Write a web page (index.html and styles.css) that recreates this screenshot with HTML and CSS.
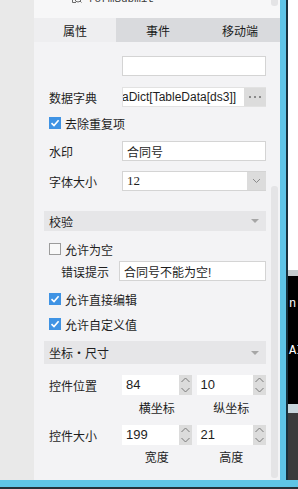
FILE: index.html
```html
<!DOCTYPE html>
<html>
<head>
    <title>控件属性</title>
    <meta charset="utf-8">
    <link rel="stylesheet" href="styles.css">
</head>
<body>
    <div class="main">
        <!-- Left gutter -->
        <div class="side"></div>

        <!-- Property panel -->
        <div class="panel">
            <div class="tree">
                <div class="node">
                    <svg class="node-icon" width="11" height="14" viewBox="0 0 11 14">
                        <path d="M1.5 1 V12.5 H5" fill="none" stroke="#6b6b6b"/>
                        <circle cx="7" cy="9" r="3" fill="none" stroke="#6b6b6b"/>
                        <path d="M9 11 L10.5 12.5" stroke="#6b6b6b"/>
                    </svg>
                    <span>formSubmit</span>
                </div>
                <div class="tree-bar"><div class="tree-thumb"></div></div>
            </div>

            <div class="tabs">
                <div class="tab active">属性</div>
                <div class="tab">事件</div>
                <div class="tab last">移动端</div>
            </div>

            <div class="scroller">
                <div class="form">
                    <div class="row r1">
                        <div class="label"></div>
                        <div class="field"></div>
                    </div>
                    <div class="row r2">
                        <div class="label">数据字典</div>
                        <div class="field dict">
                            <span class="dict-text">aDict[TableData[ds3]]</span>
                            <span class="dots"><i></i><i></i><i></i></span>
                        </div>
                    </div>
                    <div class="row check-row r3">
                        <span class="check on"><svg width="12" height="12" viewBox="0 0 12 12"><path d="M2.5 6.2 L5 8.6 L9.6 3.2" fill="none" stroke="#fff" stroke-width="1.6"/></svg></span>
                        <span>去除重复项</span>
                    </div>
                    <div class="row r4">
                        <div class="label">水印</div>
                        <div class="field">合同号</div>
                    </div>
                    <div class="row r5">
                        <div class="label">字体大小</div>
                        <div class="field select">
                            <span class="select-text">12</span>
                            <span class="drop"><svg width="9" height="6" viewBox="0 0 9 6"><path d="M1 1 L4.5 4.5 L8 1" fill="none" stroke="#8a8a8a"/></svg></span>
                        </div>
                    </div>

                    <div class="section s1">
                        <span>校验</span>
                        <span class="tri"></span>
                    </div>
                    <div class="row check-row r6">
                        <span class="check"></span>
                        <span>允许为空</span>
                    </div>
                    <div class="row r7">
                        <div class="label sub">错误提示</div>
                        <div class="field">合同号不能为空!</div>
                    </div>
                    <div class="row check-row r8">
                        <span class="check on"><svg width="12" height="12" viewBox="0 0 12 12"><path d="M2.5 6.2 L5 8.6 L9.6 3.2" fill="none" stroke="#fff" stroke-width="1.6"/></svg></span>
                        <span>允许直接编辑</span>
                    </div>
                    <div class="row check-row r9">
                        <span class="check on"><svg width="12" height="12" viewBox="0 0 12 12"><path d="M2.5 6.2 L5 8.6 L9.6 3.2" fill="none" stroke="#fff" stroke-width="1.6"/></svg></span>
                        <span>允许自定义值</span>
                    </div>

                    <div class="section s2">
                        <span>坐标・尺寸</span>
                        <span class="tri"></span>
                    </div>
                    <div class="row r10">
                        <div class="label">控件位置</div>
                        <div class="pair">
                            <div class="spin">
                                <span class="spin-val">84</span>
                                <span class="spin-btn">
                                    <svg width="11" height="18" viewBox="0 0 11 18"><path d="M1.5 6 L5.5 2 L9.5 6 M1.5 12 L5.5 16 L9.5 12" fill="none" stroke="#7a7a7a"/></svg>
                                </span>
                            </div>
                            <div class="spin">
                                <span class="spin-val">10</span>
                                <span class="spin-btn">
                                    <svg width="11" height="18" viewBox="0 0 11 18"><path d="M1.5 6 L5.5 2 L9.5 6 M1.5 12 L5.5 16 L9.5 12" fill="none" stroke="#7a7a7a"/></svg>
                                </span>
                            </div>
                        </div>
                    </div>
                    <div class="caps c1">
                        <span>横坐标</span>
                        <span>纵坐标</span>
                    </div>
                    <div class="row r11">
                        <div class="label">控件大小</div>
                        <div class="pair">
                            <div class="spin">
                                <span class="spin-val">199</span>
                                <span class="spin-btn">
                                    <svg width="11" height="18" viewBox="0 0 11 18"><path d="M1.5 6 L5.5 2 L9.5 6 M1.5 12 L5.5 16 L9.5 12" fill="none" stroke="#7a7a7a"/></svg>
                                </span>
                            </div>
                            <div class="spin">
                                <span class="spin-val">21</span>
                                <span class="spin-btn">
                                    <svg width="11" height="18" viewBox="0 0 11 18"><path d="M1.5 6 L5.5 2 L9.5 6 M1.5 12 L5.5 16 L9.5 12" fill="none" stroke="#7a7a7a"/></svg>
                                </span>
                            </div>
                        </div>
                    </div>
                    <div class="caps c2">
                        <span>宽度</span>
                        <span>高度</span>
                    </div>
                </div>
                <div class="vscroll"><div class="thumb"></div></div>
            </div>
        </div>

        <!-- Window edge -->
        <div class="edge"></div>

        <!-- Console behind -->
        <div class="term">
            <div class="t-white"></div>
            <div class="t-gray"></div>
            <div class="t-black">
                <div class="t-line l1">n</div>
                <div class="t-line l2">AI</div>
            </div>
            <div class="t-light"></div>
            <div class="t-dark"></div>
        </div>
    </div>
    <div class="bottom"></div>
</body>
</html>
```

FILE: styles.css
```css
body {
    margin: 0;
    width: 298px;
    height: 489px;
    overflow: hidden;
    background: #25303a;
    font-family: "Liberation Sans", "Noto Sans CJK SC", sans-serif;
    font-size: 12px;
    color: #1e1e1e;
}
.main {
    display: flex;
    height: 480px;
}
.side {
    width: 34px;
    background-color: #e9e9e9;
}
/* Property panel */
.panel {
    width: 246px;
    display: flex;
    flex-direction: column;
    background-color: #f3f3f5;
}
.tree {
    height: 18px;
    display: flex;
    background-color: #f7f7f8;
    overflow: hidden;
}
.node {
    flex: 1;
    display: flex;
    align-items: flex-start;
    margin-top: -8px;
    padding-left: 37px;
    height: 14px;
    font-family: "Liberation Mono", monospace;
    font-size: 11px;
    line-height: 14px;
    color: #3c3c3c;
}
.node-icon {
    margin-right: 6px;
    margin-top: -2px;
}
.tree-bar {
    width: 10px;
}
.tree-thumb {
    width: 7px;
    height: 6px;
    margin-left: 1px;
    background-color: #e4e4e6;
    border-radius: 0 0 3px 3px;
}
/* Tabs */
.tabs {
    display: flex;
    height: 24px;
    background-color: #d9dadd;
}
.tab {
    width: 84px;
    display: flex;
    align-items: center;
    justify-content: center;
    color: #1a1a1a;
}
.tab.active {
    width: 82px;
    background-color: #eeeef0;
}
.tab.last {
    width: 80px;
}
/* Scroll area */
.scroller {
    flex: 1;
    display: flex;
}
.form {
    width: 222px;
    padding: 0 4px 0 10px;
}
.vscroll {
    width: 10px;
}
.thumb {
    width: 7px;
    height: 292px;
    margin: 144px 0 0 1px;
    background-color: #e4e4e6;
    border-radius: 3px;
}
.row {
    display: flex;
    align-items: center;
    height: 20px;
    padding-left: 5px;
}
.label {
    width: 73px;
    flex-shrink: 0;
}
.label.sub {
    width: 58px;
    padding-left: 12px;
}
.field {
    flex: 1;
    height: 18px;
    display: flex;
    align-items: center;
    padding-left: 4px;
    background-color: #fff;
    border: 1px solid #d4d4d4;
    overflow: hidden;
    white-space: nowrap;
}
.dict {
    padding-left: 0;
    border-color: #e2e2e2;
    border-right: none;
}
.dict-text {
    flex: 1;
    overflow: hidden;
    direction: rtl;
    text-align: left;
    margin-left: -1px;
}
.dots {
    width: 22px;
    height: 20px;
    display: flex;
    align-items: center;
    justify-content: center;
    gap: 3px;
    background-color: #dcdcdc;
}
.dots i {
    width: 2px;
    height: 2px;
    background-color: #8a8a8a;
}
.select {
    padding-right: 0;
    border-right: none;
}
.select-text {
    flex: 1;
    font-family: "Liberation Serif", serif;
    font-size: 13px;
}
.drop {
    width: 19px;
    height: 20px;
    display: flex;
    align-items: center;
    justify-content: center;
    background-color: #dcdcdc;
}
/* Checkboxes */
.check-row span:last-child {
    margin-left: 4px;
}
.check {
    width: 12px;
    height: 12px;
    box-sizing: border-box;
    border: 1px solid #9c9c9c;
    background-color: #f9f9f9;
}
.check.on {
    border: none;
    background-color: #3f93e4;
}
.check svg {
    display: block;
}
/* Collapsible section headers */
.section {
    display: flex;
    align-items: center;
    justify-content: space-between;
    height: 20px;
    padding: 0 7px 0 5px;
    background-color: #e6e6e8;
}
.tri {
    width: 0;
    height: 0;
    border-left: 4px solid transparent;
    border-right: 4px solid transparent;
    border-top: 4px solid #a6a6a6;
}
/* Spinners */
.pair {
    flex: 1;
    display: flex;
    gap: 5px;
}
.spin {
    flex: 1;
    height: 20px;
    display: flex;
    background-color: #fff;
}
.spin-val {
    flex: 1;
    padding-left: 4px;
    line-height: 20px;
    font-size: 13px;
}
.spin-btn {
    width: 13px;
    display: flex;
    align-items: center;
    justify-content: center;
    background-color: #dcdcdc;
}
.caps {
    display: flex;
    height: 14px;
    padding-left: 78px;
    line-height: 14px;
}
.caps span {
    flex: 1;
    text-align: center;
}
.caps span:first-child {
    margin-right: 5px;
}
/* Vertical spacing of the rows */
.r1 { margin-top: 14px; }
.r2 { margin-top: 11px; }
.r3 { margin-top: 6px; }
.r4 { margin-top: 8px; }
.r5 { margin-top: 10px; }
.s1 { margin-top: 20px; }
.r6 { margin-top: 8px; }
.r7 { margin-top: 2px; }
.r8 { margin-top: 8px; }
.r9 { margin-top: 5px; }
.s2 { margin-top: 7px; height: 23px; }
.r10 { margin-top: 11px; }
.c1 { margin-top: 7px; }
.r11 { margin-top: 9px; }
.c2 { margin-top: 6px; }
/* Window edge and console */
.edge {
    width: 6px;
    background-color: #5fc4e6;
    border-right: 2px solid #17303c;
}
.term {
    width: 10px;
    display: flex;
    flex-direction: column;
}
.t-white {
    height: 270px;
    background-color: #fff;
}
.t-gray {
    height: 6px;
    background-color: #c4cbce;
}
.t-black {
    height: 128px;
    background-color: #000;
    color: #fff;
    font-family: "Liberation Mono", monospace;
    font-size: 12px;
    line-height: 14px;
}
.t-line {
    padding-left: 1px;
}
.l1 { margin-top: 21px; }
.l2 { margin-top: 33px; }
.t-light {
    height: 9px;
    background-color: #c8d6dc;
}
.t-dark {
    flex: 1;
    background-color: #3b3b3b;
}
.bottom {
    height: 7px;
    background-color: #5fc4e6;
}
```
